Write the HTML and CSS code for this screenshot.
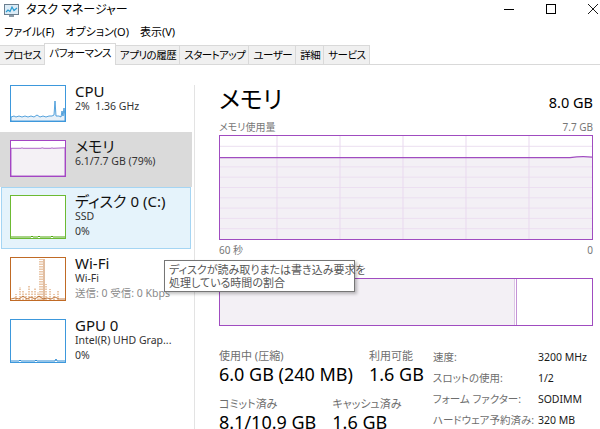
FILE: index.html
```html
<!DOCTYPE html>
<html lang="ja">
<head>
  <meta charset="UTF-8">
  <title>タスク マネージャー</title>
  <link rel="stylesheet" href="styles.css">
</head>
<body>
  <div class="window">
    <!-- タイトルバー -->
    <div class="titlebar">
      <svg class="app-icon" viewBox="0 0 15 14">
        <rect x="0.5" y="0.5" width="14" height="10" fill="#dcecf7" stroke="#6b7f8f"/>
        <polyline points="2,8 4,6 6,7.5 8,3 10,6.5 13,4" fill="none" stroke="#2b9bd0" stroke-width="1.2"/>
        <rect x="5" y="11" width="5" height="2" fill="#8a9aa8"/>
      </svg>
      <span class="app-title">タスク マネージャー</span>
      <div class="controls">
        <span class="ctl"><svg viewBox="0 0 10 10"><line x1="0" y1="5.5" x2="10" y2="5.5" stroke="#000"/></svg></span>
        <span class="ctl"><svg viewBox="0 0 10 10"><rect x="0.5" y="0.5" width="9" height="9" fill="none" stroke="#000"/></svg></span>
        <span class="ctl"><svg viewBox="0 0 10 10"><path d="M0 0 L10 10 M10 0 L0 10" stroke="#000" stroke-width="0.9"/></svg></span>
      </div>
    </div>

    <ul class="menu">
      <li>ファイル(F)</li>
      <li>オプション(O)</li>
      <li>表示(V)</li>
    </ul>

    <ul class="tabs">
      <li>プロセス</li>
      <li class="on">パフォーマンス</li>
      <li>アプリの履歴</li>
      <li>スタートアップ</li>
      <li>ユーザー</li>
      <li>詳細</li>
      <li>サービス</li>
    </ul>

    <div class="perf">
      <!-- 左のリスト -->
      <ul class="side">
        <li class="item">
          <svg class="thumb thumb-s cpu" viewBox="0 0 54 35" preserveAspectRatio="none">
            <polygon points="0,35 0,31 3,30 5,31 8,30 11,31 14,30 17,31 20,30 23,31 26,29 29,31 32,30 35,31 38,30 41,30 43,29 44,15 45,30 48,30 50,31 51,25 52,30 53,22 54,30 54,35" fill="#e8f1f9" stroke="#2c8bd3" stroke-width="0.8"/>
          </svg>
          <div class="info">
            <p class="name">CPU</p>
            <p class="sub">2%&nbsp;&nbsp;1.36 GHz</p>
          </div>
        </li>
        <li class="item sel">
          <svg class="thumb thumb-s mem" viewBox="0 0 54 36" preserveAspectRatio="none">
            <polygon points="0,36 0,7.5 10,7.5 11,7 12,7.5 30,7.5 31,7 33,7.5 40,7.5 41,7 42,7.5 54,7 54,36" fill="#f4f1f5" stroke="#9a3cbb" stroke-width="0.8"/>
          </svg>
          <div class="info">
            <p class="name">メモリ</p>
            <p class="sub">6.1/7.7 GB (79%)</p>
          </div>
        </li>
        <li class="item hover">
          <svg class="thumb thumb-l disk" viewBox="0 0 54 42" preserveAspectRatio="none">
            <polyline points="0,41 20,41 21,40 22,41 27,41 28,40 29,41 40,41 41,40 42,41 54,41" fill="none" stroke="#4da60c" stroke-width="1"/>
          </svg>
          <div class="info">
            <p class="name">ディスク 0 (C:)</p>
            <p class="sub">SSD</p>
            <p class="sub">0%</p>
          </div>
        </li>
        <li class="item">
          <svg class="thumb thumb-l wifi" viewBox="0 0 54 42" preserveAspectRatio="none">
            <g stroke="#c9732c" stroke-width="0.8" stroke-dasharray="1.5 1">
              <line x1="5" y1="42" x2="5" y2="36"/>
              <line x1="9" y1="42" x2="9" y2="29"/>
              <line x1="12" y1="42" x2="12" y2="33"/>
              <line x1="15" y1="42" x2="15" y2="35"/>
              <line x1="18" y1="42" x2="18" y2="27"/>
              <line x1="21" y1="42" x2="21" y2="33"/>
              <line x1="24" y1="42" x2="24" y2="30"/>
              <line x1="27" y1="42" x2="27" y2="34"/>
              <line x1="29" y1="42" x2="29" y2="1"/>
              <line x1="31" y1="42" x2="31" y2="1"/>
              <line x1="35" y1="42" x2="35" y2="26"/>
              <line x1="39" y1="42" x2="39" y2="31"/>
              <line x1="43" y1="42" x2="43" y2="36"/>
              <line x1="47" y1="42" x2="47" y2="33"/>
            </g>
            <line x1="33" y1="42" x2="33" y2="1" stroke="#b35b14" stroke-width="0.8"/>
            <polyline points="0,41 4,40 8,41 12,38 16,41 20,39 24,41 28,38 32,41 36,40 40,41 44,39 48,41 54,41" fill="none" stroke="#b35b14" stroke-width="0.8"/>
          </svg>
          <div class="info">
            <p class="name">Wi-Fi</p>
            <p class="sub">Wi-Fi</p>
            <p class="sub dim">送信: 0 受信: 0 Kbps</p>
          </div>
        </li>
        <li class="item">
          <svg class="thumb thumb-l gpu" viewBox="0 0 54 42" preserveAspectRatio="none">
            <polyline points="0,41 8,41 9,40 10,41 24,41 25,40 26,41 44,41 45,39 46,41 54,41" fill="none" stroke="#2c8bd3" stroke-width="1"/>
          </svg>
          <div class="info">
            <p class="name">GPU 0</p>
            <p class="sub">Intel(R) UHD Grap...</p>
            <p class="sub">0%</p>
          </div>
        </li>
      </ul>

      <div class="divider"></div>

      <!-- 右の詳細 -->
      <div class="main">
        <div class="head">
          <h1 class="title">メモリ</h1>
          <span class="total">8.0 GB</span>
        </div>
        <div class="axis">
          <span>メモリ使用量</span>
          <span>7.7 GB</span>
        </div>
        <svg class="graph" viewBox="0 0 372 103" preserveAspectRatio="none">
          <rect x="0" y="21.6" width="372" height="82" fill="#f3f0f5"/>
          <g stroke="#ecdff1" stroke-width="1">
            <line x1="0" y1="10.3" x2="372" y2="10.3"/>
            <line x1="0" y1="30.9" x2="372" y2="30.9"/>
            <line x1="0" y1="41.2" x2="372" y2="41.2"/>
            <line x1="0" y1="51.5" x2="372" y2="51.5"/>
            <line x1="0" y1="61.8" x2="372" y2="61.8"/>
            <line x1="0" y1="72.1" x2="372" y2="72.1"/>
            <line x1="0" y1="82.4" x2="372" y2="82.4"/>
            <line x1="0" y1="92.7" x2="372" y2="92.7"/>
          </g>
          <g stroke="#e9d9ef" stroke-width="1">
            <line x1="57" y1="0" x2="57" y2="103"/>
            <line x1="120" y1="0" x2="120" y2="103"/>
            <line x1="183" y1="0" x2="183" y2="103"/>
            <line x1="246" y1="0" x2="246" y2="103"/>
            <line x1="309" y1="0" x2="309" y2="103"/>
          </g>
          <path d="M0 21.6 H350 C358 20.6 365 20.4 372 21.2" fill="none" stroke="#a04cc0" stroke-width="1.2"/>
        </svg>
        <div class="axis axis-b">
          <span>60 秒</span>
          <span>0</span>
        </div>
        <div class="compo">
          <div class="seg-use"></div>
          <div class="seg-mod"></div>
        </div>

        <div class="stats">
          <div class="stats-l">
            <div class="row">
              <div class="stat">
                <p class="lbl">使用中 (圧縮)</p>
                <p class="val">6.0 GB (240 MB)</p>
              </div>
              <div class="stat">
                <p class="lbl">利用可能</p>
                <p class="val">1.6 GB</p>
              </div>
            </div>
            <div class="row row-2">
              <div class="stat">
                <p class="lbl">コミット済み</p>
                <p class="val">8.1/10.9 GB</p>
              </div>
              <div class="stat">
                <p class="lbl">キャッシュ済み</p>
                <p class="val">1.6 GB</p>
              </div>
            </div>
          </div>
          <dl class="stats-r">
            <dt>速度:</dt><dd>3200 MHz</dd>
            <dt>スロットの使用:</dt><dd>1/2</dd>
            <dt>フォーム ファクター:</dt><dd>SODIMM</dd>
            <dt>ハードウェア予約済み:</dt><dd>320 MB</dd>
          </dl>
        </div>
      </div>
    </div>

    <!-- ツールチップ -->
    <div class="tip">
      ディスクが読み取りまたは書き込み要求を<br>処理している時間の割合
    </div>
  </div>
</body>
</html>
```

FILE: styles.css
```css
/* reset */
* {
  box-sizing: border-box;
}

html,
body,
ul,
p,
dl,
dd,
dt,
h1 {
  margin: 0;
  padding: 0;
}

ul {
  list-style: none;
}

body {
  width: 600px;
  height: 429px;
  overflow: hidden;
  background: #fff;
  font: 11px/1.3 "Noto Sans", "Noto Sans CJK JP", sans-serif;
  font-feature-settings: "palt";
  color: #000;
}

.window {
  position: relative;
  height: 429px;
  display: flex;
  flex-direction: column;
}

/* タイトルバー */
.titlebar {
  height: 22px;
  display: flex;
  align-items: flex-start;
  padding: 3px 0 0 4px;
}

.app-icon {
  width: 15px;
  height: 14px;
  margin: 1px 7px 0 0;
}

.app-title {
  font-size: 12px;
  line-height: 13px;
}

.controls {
  margin: -3px -14px 0 auto;
  height: 17px;
  display: flex;
}

.ctl {
  width: 42px;
  display: flex;
  align-items: center;
  justify-content: center;
}

.ctl svg {
  width: 10px;
  height: 10px;
}

/* メニュー */
.menu {
  height: 20px;
  display: flex;
  align-items: center;
  padding-left: 4px;
}

.menu li {
  margin-right: 11px;
  line-height: 14px;
}

/* タブ */
.tabs {
  height: 23px;
  display: flex;
  align-items: flex-end;
  border-bottom: 1px solid #d9d9d9;
  font-size: 10.5px;
  letter-spacing: -0.5px;
}

.tabs li {
  height: 19px;
  line-height: 18px;
  padding: 0 3px 0 4px;
  margin-left: -1px;
  background: #f0f0f0;
  border: 1px solid #d9d9d9;
  border-bottom: none;
}

.tabs li.on {
  height: 22px;
  margin-bottom: -1px;
  background: #fff;
  position: relative;
  padding: 0 4px;
}

/* パフォーマンス */
.perf {
  flex: 1;
  display: flex;
  min-height: 0;
}

.side {
  width: 192px;
  padding-top: 12px;
  flex: none;
}

.item {
  display: flex;
  gap: 9px;
  padding: 8px 0 10px 10px;
}

.item.sel {
  background: #dadada;
}

.item.hover {
  margin: 0 1px;
  padding-left: 9px;
  background: #e5f3fb;
  box-shadow: inset 0 0 0 1px #a5d5f3;
}

.thumb {
  display: block;
  width: 56px;
  flex: none;
  border: 1px solid;
  background: #fff;
}

.thumb-s {
  height: 37px;
}

.thumb-l {
  height: 44px;
}

.cpu,
.gpu {
  border-color: #3d98dc;
}

.mem {
  border-color: #a445c4;
}

.disk {
  border-color: #6cba33;
}

.wifi {
  border-color: #c06a25;
}

.info {
  margin-top: -2px;
}

.name {
  font-size: 15px;
  line-height: 16px;
  color: #111;
}

.sub {
  font-size: 10.5px;
  line-height: 15px;
  color: #333;
  white-space: nowrap;
}

.sub.dim {
  color: #8a8a8a;
}

.divider {
  width: 1px;
  flex: none;
  margin: 20px 0 0 2px;
  background: #e3e3e3;
}

.main {
  flex: 1;
  min-width: 0;
  overflow: hidden;
  padding: 20px 7px 0 24px;
}

.head {
  display: flex;
  justify-content: space-between;
  align-items: baseline;
}

.title {
  font-size: 24px;
  line-height: 28px;
  font-weight: normal;
}

.total {
  font-size: 14.5px;
}

.axis {
  display: flex;
  justify-content: space-between;
  margin-top: 8px;
  font-size: 10px;
  line-height: 12px;
  color: #777;
}

.axis-b {
  margin-top: 4px;
}

.graph {
  display: block;
  width: 374px;
  height: 105px;
  margin-top: 2px;
  border: 1px solid #a04cc0;
}

.compo {
  display: flex;
  width: 374px;
  height: 48px;
  margin-top: 22px;
  border: 1px solid #a04cc0;
}

.seg-use {
  flex: 0 0 295px;
  background: #f3f0f5;
  border-right: 1px solid #dcc6e5;
}

.seg-mod {
  flex: 0 0 2px;
  background: #fff;
  border-right: 1px solid #c493d6;
}

/* 数値 */
.stats {
  display: flex;
  gap: 9px;
  margin-top: 23px;
}

.stats-l {
  flex: none;
}

.row {
  display: flex;
  gap: 16px;
}

.row-2 {
  margin-top: 12px;
}

.lbl {
  font-size: 11px;
  line-height: 14px;
  color: #6e6e6e;
}

.val {
  font-size: 18px;
  line-height: 22px;
  white-space: nowrap;
}

.stats-r {
  display: grid;
  grid-template-columns: 105px auto;
  font-size: 10.5px;
  line-height: 16.5px;
  white-space: nowrap;
}

.stats-r dt {
  color: #6e6e6e;
}

.stats-r dd {
  color: #1a1a1a;
}

/* ツールチップ */
.tip {
  position: absolute;
  left: 164px;
  top: 260px;
  width: 191px;
  height: 32px;
  padding: 3px 0 0 4px;
  background: #fff;
  border: 1px solid #767676;
  box-shadow: 2px 2px 3px rgba(0, 0, 0, 0.25);
  font-size: 11px;
  line-height: 12.5px;
  color: #575757;
  white-space: nowrap;
}
```
